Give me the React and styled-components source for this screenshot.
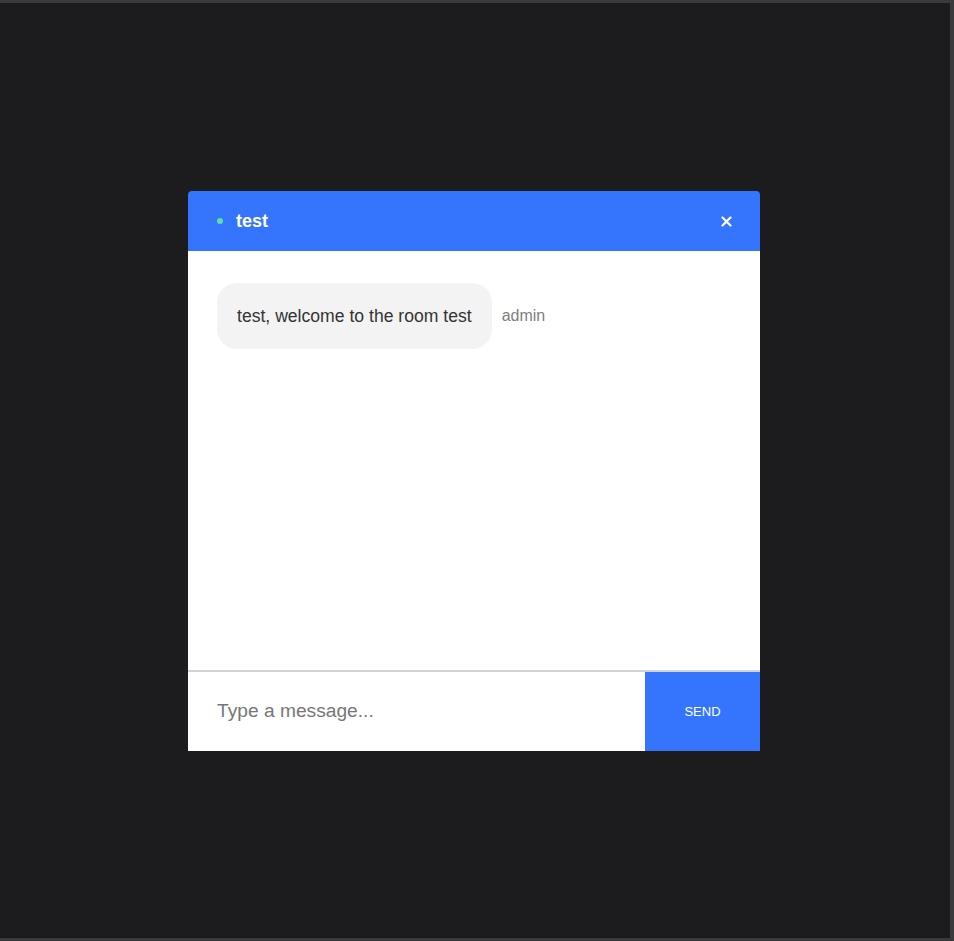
import React from 'react';
import styled, { createGlobalStyle } from 'styled-components';

const GlobalStyle = createGlobalStyle`
  html, body {
    margin: 0;
    padding: 0;
    background: #1c1c1e;
    font-family: "Liberation Sans", Arial, sans-serif;
  }
  * {
    box-sizing: border-box;
  }
`;

const Page = styled.div`
  height: 941px;
  border-top: 3px solid #3a3a3c;
  border-right: 4px solid #3a3a3c;
  border-bottom: 3px solid #3a3a3c;
  display: flex;
  align-items: center;
  justify-content: center;
`;

const Chat = styled.div`
  width: 572px;
  display: flex;
  flex-direction: column;
  margin-right: 2px;
`;

const Header = styled.div`
  height: 60px;
  background: #3574fd;
  border-radius: 4px 4px 0 0;
  display: flex;
  align-items: center;
  padding: 2px 28px 0 29px;
  color: #fff;
`;

const Dot = styled.span`
  width: 6px;
  height: 6px;
  border-radius: 50%;
  background: #5de0a5;
  margin-right: 13px;
  margin-top: -2px;
`;

const Title = styled.h3`
  margin: 0;
  font-size: 18px;
  font-weight: 700;
  flex: 1;
`;

const Close = styled.button`
  background: none;
  border: none;
  color: #fff;
  padding: 0;
  cursor: pointer;
  display: flex;
`;

const Messages = styled.div`
  height: 419px;
  background: #fff;
  padding: 32px 29px;
`;

const Row = styled.div`
  display: flex;
  align-items: center;
`;

const Bubble = styled.div`
  background: #f3f3f3;
  border-radius: 20px;
  padding: 2px 20px 0;
  height: 66px;
  display: flex;
  align-items: center;
  font-size: 17.6px;
  color: #333;
`;

const Sender = styled.span`
  margin-left: 10px;
  font-size: 16px;
  color: #808080;
`;

const Composer = styled.form`
  display: flex;
  height: 81px;
  border-top: 2px solid #d3d3d3;
  background: #fff;
`;

const Input = styled.input`
  flex: 1;
  border: none;
  outline: none;
  padding: 0 29px;
  font-size: 19.2px;
  font-family: inherit;
  color: #333;
  &::placeholder {
    color: #777;
  }
`;

const SendButton = styled.button`
  width: 115px;
  border: none;
  background: #3574fd;
  color: #fff;
  font-size: 13px;
  font-family: inherit;
  text-transform: uppercase;
  cursor: pointer;
`;

const App = () => {
  return (
    <>
      <GlobalStyle />
      <Page>
        <Chat>
          <Header>
            <Dot />
            <Title>test</Title>
            <Close aria-label="close">
              <svg width="11" height="11" viewBox="0 0 11 11">
                <path d="M1.5 1.5l8 8M9.5 1.5l-8 8" stroke="#fff" strokeWidth="2.2" strokeLinecap="round" />
              </svg>
            </Close>
          </Header>
          <Messages>
            <Row>
              <Bubble>test, welcome to the room test</Bubble>
              <Sender>admin</Sender>
            </Row>
          </Messages>
          <Composer onSubmit={(e) => e.preventDefault()}>
            <Input placeholder="Type a message..." />
            <SendButton type="submit">Send</SendButton>
          </Composer>
        </Chat>
      </Page>
    </>
  );
};

export default App;
